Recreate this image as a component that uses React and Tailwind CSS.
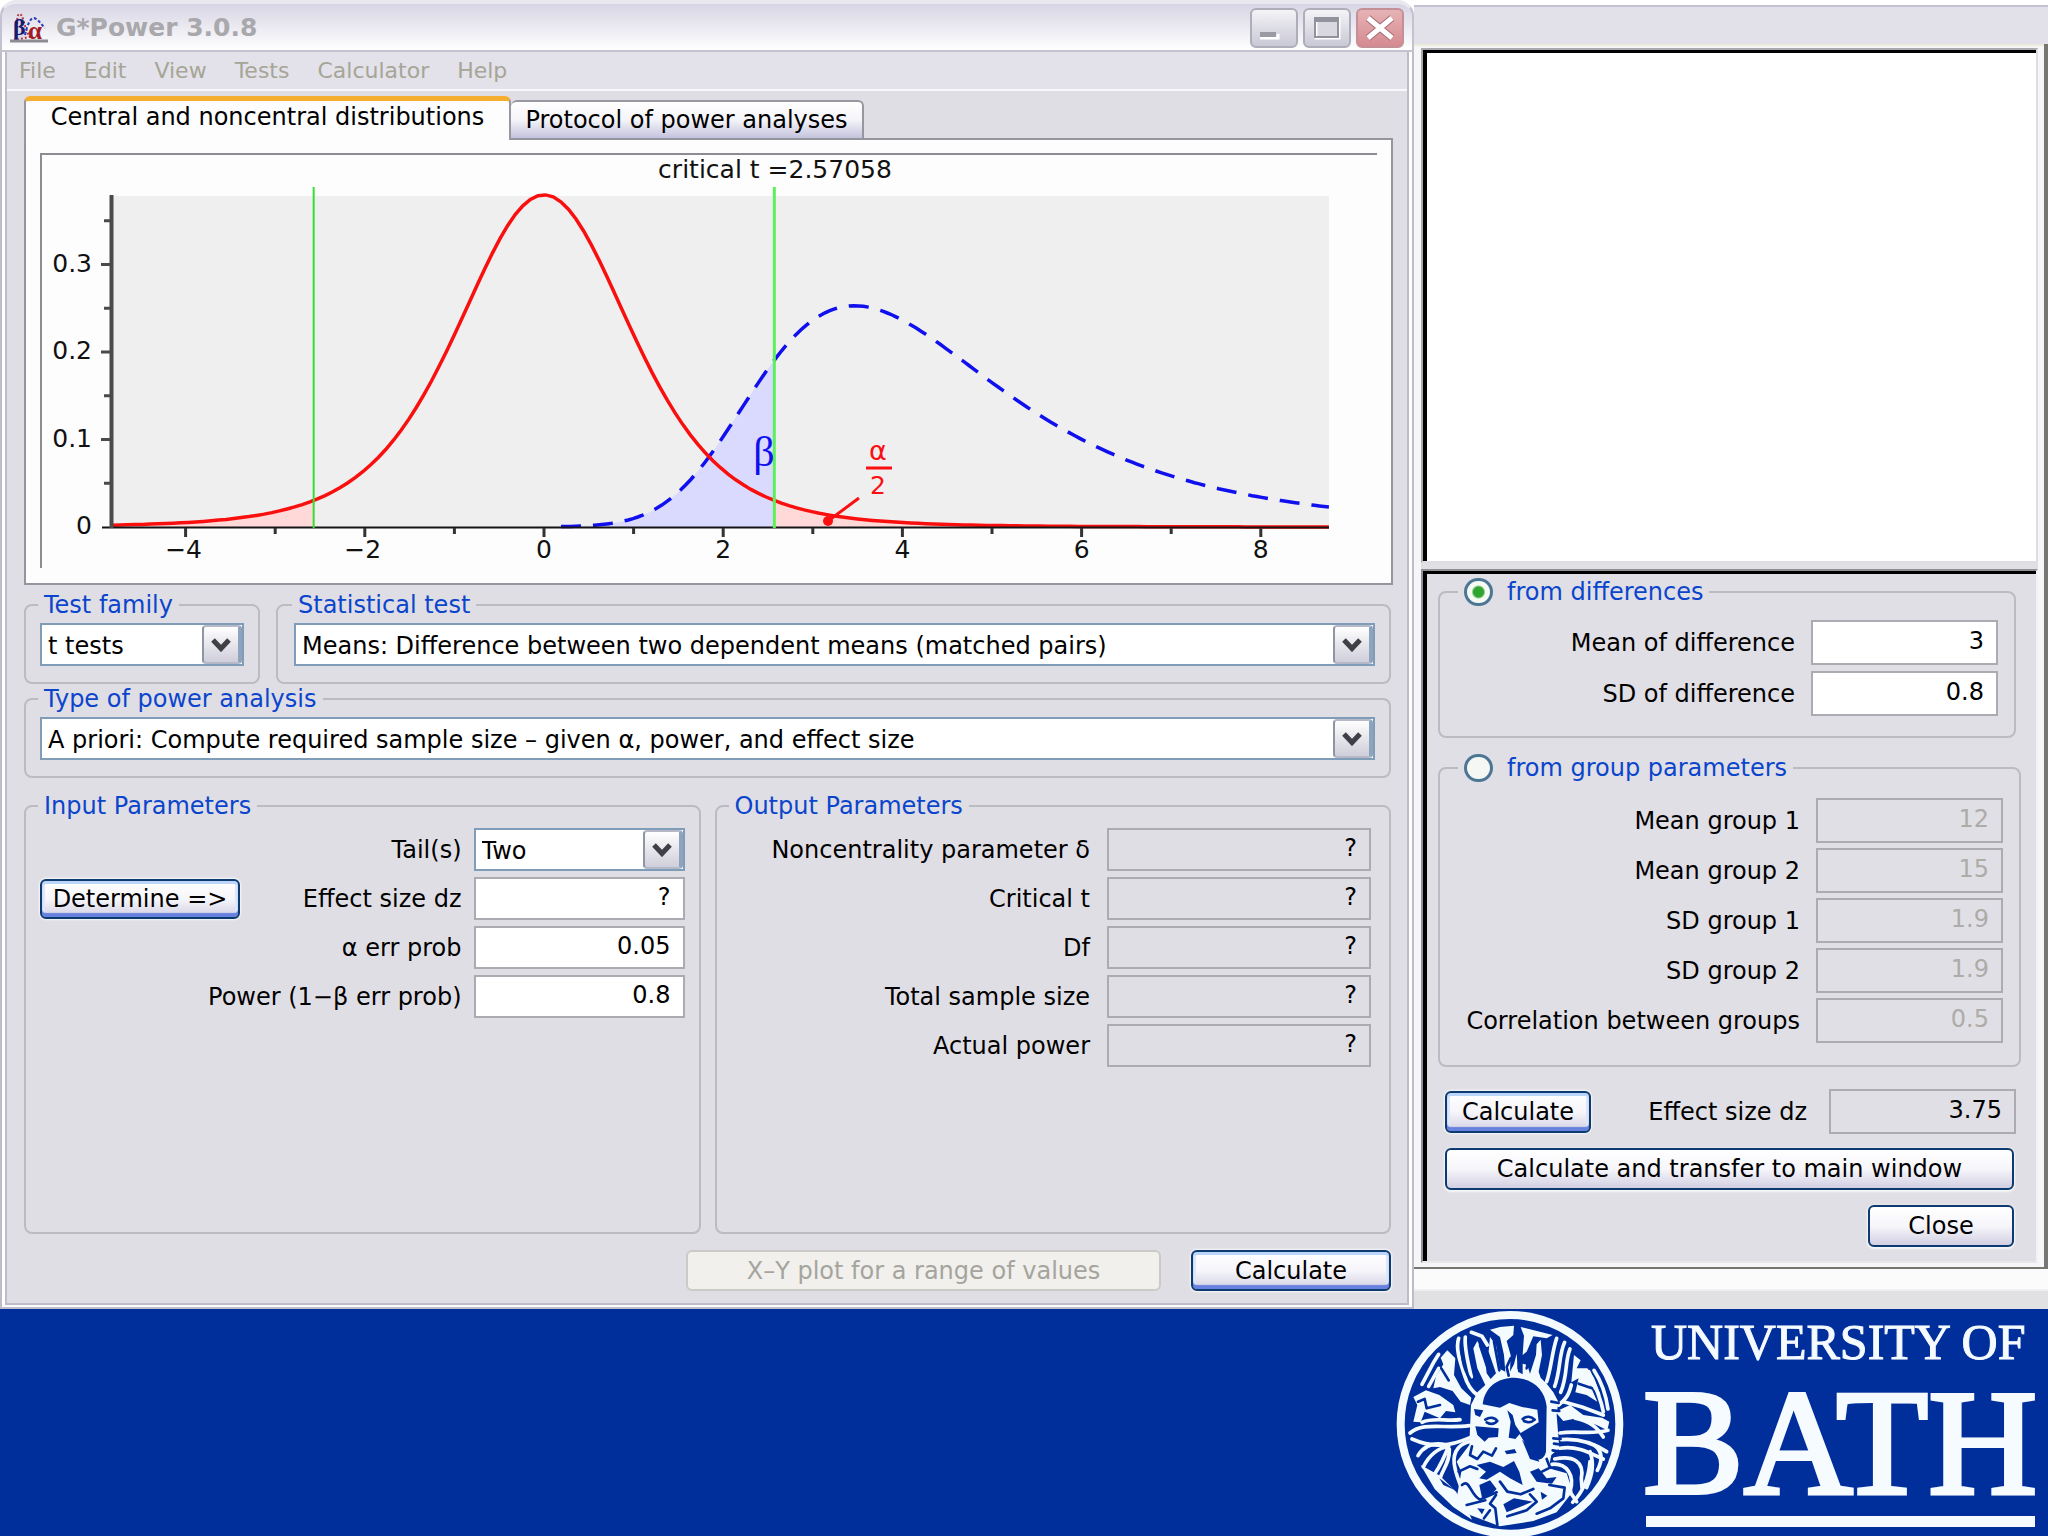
import React, { useId, useState } from "react";

const FRAME_TEXT = "text-2xl leading-7";

/* ---------- distribution maths ---------- */
const DF = 5;
const NCP = 3.87;
const CRIT = 2.57058;
const X0 = 504;
const Y0 = 374;
const SX = 89.6;
const SY = 875;
const LEFT = -4.82;
const RIGHT = 8.76;

const px = (t) => X0 + t * SX;
const py = (d) => Y0 - d * SY;

const centralT = (t) => 0.37961 * Math.pow(1 + (t * t) / DF, -(DF + 1) / 2);

const chiWeights = (() => {
  const out = [];
  let total = 0;
  for (let s = 0.01; s < 3.5; s += 0.02) {
    const w = Math.pow(s, DF - 1) * Math.exp((-DF * s * s) / 2);
    out.push([s, w]);
    total += w;
  }
  return out.map(([s, w]) => [s, w / total]);
})();

const noncentralT = (t) =>
  chiWeights.reduce((sum, [s, w]) => {
    const z = t * s - NCP;
    return sum + (w * s * Math.exp((-z * z) / 2)) / Math.sqrt(2 * Math.PI);
  }, 0);

function line(fn, from, to) {
  const n = 160;
  let d = "";
  for (let i = 0; i <= n; i++) {
    const t = from + ((to - from) * i) / n;
    d += (i ? "L" : "M") + px(t).toFixed(1) + " " + py(fn(t)).toFixed(1);
  }
  return d;
}

const area = (fn, from, to) => line(fn, from, to) + `L${px(to)} ${Y0}L${px(from)} ${Y0}Z`;

const CENTRAL = line(centralT, LEFT, RIGHT);
const NONCENTRAL = line(noncentralT, 0.19, RIGHT);
const BETA_AREA = area(noncentralT, -1, CRIT);
const LEFT_AREA = area(centralT, LEFT, -CRIT);
const RIGHT_AREA = area(centralT, CRIT, RIGHT);

function Chart() {
  return (
    <svg viewBox="0 0 1337 415" className="block h-auto w-full bg-[#fdfdfe]" fontFamily='"DejaVu Sans", sans-serif' fontSize="25" role="img" aria-label="Central and noncentral distributions">
      <path d="M1 415V1H1337" fill="none" stroke="#8c8c92" strokeWidth="2" />
      <rect x="73" y="43" width="1216" height="331" fill="#f0eff0" />
      <path d={BETA_AREA} fill="#dadaff" />
      <path d={LEFT_AREA} fill="#ffd8d8" />
      <path d={RIGHT_AREA} fill="#ffd8d8" />
      <path d={NONCENTRAL} fill="none" stroke="#1010ee" strokeWidth="3.5" strokeDasharray="20 12" />
      <path d={CENTRAL} fill="none" stroke="#fa0f0f" strokeWidth="3.5" />
      <path d="M62 374.5H1289" stroke="#151515" strokeWidth="2" />
      <path d="M71.500 42V375" stroke="#4a4a4a" strokeWidth="4" />
      {[0.1, 0.2, 0.3].map((v) => (
        <path key={v} d={`M61 ${py(v)}H72`} stroke="#4a4a4a" strokeWidth="3" />
      ))}
      {[0.05, 0.15, 0.25, 0.35].map((v) => (
        <path key={v} d={`M64 ${py(v)}H72`} stroke="#4a4a4a" strokeWidth="3" />
      ))}
      {[-4, -2, 0, 2, 4, 6, 8].map((v) => (
        <path key={v} d={`M${px(v)} 375v9`} stroke="#333" strokeWidth="3" />
      ))}
      {[-3, -1, 1, 3, 5, 7].map((v) => (
        <path key={v} d={`M${px(v)} 375v6`} stroke="#333" strokeWidth="3" />
      ))}
      <path d={`M${px(-CRIT)} 34V375`} stroke="#35dd35" strokeWidth="2" />
      <path d={`M${px(CRIT)} 34V375`} stroke="#5df05d" strokeWidth="3" />
      <g fill="#111">
        {[0, 0.1, 0.2, 0.3].map((v) => (
          <text key={v} x="52" y={py(v) + 7} textAnchor="end">
            {v}
          </text>
        ))}
        {[-4, -2, 0, 2, 4, 6, 8].map((v) => (
          <text key={v} x={v < 0 ? px(v) - 2 : px(v)} y="405" textAnchor="middle">
            {v < 0 ? `−${-v}` : v}
          </text>
        ))}
        <text x="735" y="25" textAnchor="middle">
          critical t =2.57058
        </text>
      </g>
      <text x="724" y="313" fill="#1010ee" fontFamily='"Liberation Serif", serif' fontSize="42" textAnchor="middle">
        β
      </text>
      <g fill="#fa1010" textAnchor="middle">
        <text x="838" y="307" fontSize="27">
          α
        </text>
        <text x="838" y="341">
          2
        </text>
        <circle cx="788" cy="368" r="5" />
      </g>
      <path d="M826 315H852M819 345L788 368" stroke="#fa1010" strokeWidth="3" />
    </svg>
  );
}

/* ---------- small controls ---------- */
function ArrowGlyph() {
  return (
    <svg viewBox="0 0 20 14" className="h-[14px] w-5">
      <path d="M2 2L10 10.500L18 2" fill="none" stroke="#3f3f46" strokeWidth="5" />
    </svg>
  );
}

function Select({ label, value }) {
  return (
    <div className="relative border-2 border-[#7f9db9] bg-white">
      <select aria-label={label} defaultValue={value} className="block h-[39px] w-full appearance-none bg-white pt-0.5 pr-11 pl-1.5 outline-none">
        <option>{value}</option>
      </select>
      <span className="pointer-events-none absolute inset-y-0 right-0 flex w-10 items-center justify-center rounded-sm border-2 border-r-4 border-[#8f95a5] border-y-[#b5b8c6] border-r-[#8fa3bd] bg-linear-to-b from-white via-[#e6e6ec] to-[#cfcedb]">
        <ArrowGlyph />
      </span>
    </div>
  );
}

function Group({ title, className = "", children }) {
  return (
    <fieldset className={`min-w-0 rounded-lg border-2 border-[#bcbbc2] ${className}`}>
      <legend className="-ml-0.5 px-1.5 text-[#0b45cc]">{title}</legend>
      {children}
    </fieldset>
  );
}

function TextField({ id, value, tall, tone = "edit" }) {
  const tones = {
    edit: "bg-white text-black",
    read: "bg-transparent text-black",
    off: "bg-transparent text-[#adaca8]",
  };
  return (
    <input
      id={id}
      defaultValue={value}
      readOnly={tone === "read"}
      disabled={tone === "off"}
      className={`w-full min-w-0 rounded-none border-2 border-[#acabb1] pr-3 pb-1 text-right outline-none ${tall ? "h-[45px]" : "h-[43px]"} ${tones[tone]}`}
    />
  );
}

function PushButton({ children, className = "", active }) {
  return (
    <button
      type="button"
      className={`rounded-md border-2 border-[#0d3a70] bg-linear-to-b from-white via-[#f6f6fb] to-[#d2d0e2] text-center whitespace-nowrap ${
        active
          ? "shadow-[inset_0_3px_0_#bcd6fb,inset_0_-4px_1px_#6681de,inset_3px_0_0_#dde6fa,inset_-3px_0_0_#dde6fa,0_0_2px_1px_#f4f8f8]"
          : "shadow-[0_1px_2px_1px_#f4f8f8]"
      } ${className}`}
    >
      {children}
    </button>
  );
}

/* ---------- main window ---------- */
function AppIcon() {
  return (
    <svg viewBox="0 0 38 30" className="h-[30px] w-[38px] overflow-visible" fontFamily='"Liberation Serif", serif' fontWeight="bold">
      <path d="M5 27C8 15 6 3 9 1C14 1 13 13 20 24Z" fill="#e3d7e3" stroke="#b23a4a" strokeWidth="2" strokeDasharray="2 2" />
      <path d="M15 22C18 9 21 5 24 5C28 6 31 11 35 15" fill="none" stroke="#2f3bb5" strokeWidth="2" strokeDasharray="3 2" />
      <text x="3" y="22" fontSize="24" fill="#151a72">
        β
      </text>
      <text x="18" y="26" fontSize="25" fill="#a01c22">
        α
      </text>
      <path d="M0 28H38" stroke="#8c8c94" strokeWidth="3" />
    </svg>
  );
}

function TitleBar() {
  const box = "flex h-10 w-12 items-center justify-center rounded-md border-2";
  const plain = "border-[#aeaeba] bg-linear-to-b from-[#f4f4f7] to-[#c9c8d6]";
  return (
    <header className="flex h-[52px] items-center rounded-t-2xl border-2 border-t-4 border-[#c3c2d0] border-t-[#e9e8ef] bg-linear-to-b from-[#d7d5e4] via-[#ebeaf1] to-white pt-0.5 pr-2 pl-2">
      <AppIcon />
      <h1 className="ml-2 flex-1 text-[25px] font-bold text-[#a9a8ac]">G*Power 3.0.8</h1>
      <div className="flex gap-[5px]">
        <button type="button" aria-label="Minimize" className={`${box} ${plain}`}>
          <svg viewBox="0 0 44 36" className="h-9 w-11">
            <path d="M8 28H26V24" fill="none" stroke="#fff" strokeWidth="3" />
            <rect x="8" y="22" width="16" height="5" fill="#9a9aa4" />
          </svg>
        </button>
        <button type="button" aria-label="Maximize" className={`${box} ${plain}`}>
          <svg viewBox="0 0 44 36" className="h-9 w-11">
            <rect x="11" y="9" width="23" height="19" fill="#d9d8e0" stroke="#fff" strokeWidth="3" />
            <rect x="10" y="8" width="23" height="19" fill="none" stroke="#92929c" strokeWidth="2" />
            <path d="M9 10H34" stroke="#92929c" strokeWidth="4" />
          </svg>
        </button>
        <button type="button" aria-label="Close window" className={`${box} border-[#c58f98] bg-linear-to-b from-[#e6b3b5] to-[#d58a90]`}>
          <svg viewBox="0 0 44 36" className="h-9 w-11">
            <path d="M10 8L34 28M34 8L10 28" stroke="#a56c74" strokeWidth="7" />
            <path d="M10 8L34 28M34 8L10 28" stroke="#fff" strokeWidth="5" />
          </svg>
        </button>
      </div>
    </header>
  );
}

function Menu() {
  return (
    <nav className="flex h-[39px] items-center gap-7 border-b-2 border-[#f8f8fa] bg-[#e3e2ea] pl-3 text-[22px] text-[#a6a596]">
      {["File", "Edit", "View", "Tests", "Calculator", "Help"].map((m) => (
        <button type="button" key={m}>
          {m}
        </button>
      ))}
    </nav>
  );
}

const OUTPUTS = ["Noncentrality parameter δ", "Critical t", "Df", "Total sample size", "Actual power"];

function MainWindow() {
  const id = useId();
  return (
    <section className="flex flex-col">
      <TitleBar />
      <div className="grow border-2 border-t-0 border-[#bdbccb]">
        <div className="h-full border-x-[3px] border-b-2 border-white">
          <div className="h-full border-x-2 border-b-2 border-[#bdbcc8] bg-[#e0dee5]">
            <Menu />
            <div className="pt-[5px] pr-3.5 pb-3 pl-[17px]">
              <div className="flex items-end" role="tablist">
                <button type="button" role="tab" aria-selected="true" className="z-10 -mb-0.5 h-11 w-[487px] rounded-t-md border-x-2 border-t-[5px] border-[#98979f] border-t-[#f5ae30] bg-[#fdfdfe] pb-2 text-center leading-7">
                  Central and noncentral distributions
                </button>
                <button type="button" role="tab" aria-selected="false" className="h-[38px] w-[353px] rounded-t-md border-t-2 border-r-2 border-[#98979f] bg-linear-to-b from-white via-[#f4f4f9] to-[#c4c3dd] text-center">
                  Protocol of power analyses
                </button>
              </div>
              <div className="border-2 border-[#96959d] bg-[#fdfdfe] px-3.5 pt-[13px] pb-[15px]">
                <Chart />
              </div>
              <div className="mr-0.5">
                <div className="mt-1.5 grid grid-cols-[236fr_1115fr] gap-4">
                  <Group title="Test family" className="px-3.5 pt-1 pb-4">
                    <Select label="Test family" value="t tests" />
                  </Group>
                  <Group title="Statistical test" className="pt-1 pr-3.5 pb-4 pl-4">
                    <Select label="Statistical test" value="Means: Difference between two dependent means (matched pairs)" />
                  </Group>
                </div>
                <Group title="Type of power analysis" className="mt-px px-3.5 pt-1 pb-4">
                  <Select label="Type of power analysis" value="A priori: Compute required sample size – given α, power, and effect size" />
                </Group>
                <div className="mt-3.5 grid grid-cols-[677fr_677fr] gap-3.5">
                  <Group title="Input Parameters" className="min-h-[442px] px-3.5 pt-2">
                    <div className="grid grid-cols-[auto_1fr_211px] items-center gap-x-3 gap-y-1.5 text-right">
                      <span className="col-span-2">Tail(s)</span>
                      <div className="text-left">
                        <Select label="Tail(s)" value="Two" />
                      </div>
                      <PushButton active className="h-10 w-[200px]">
                        Determine =&gt;
                      </PushButton>
                      <label htmlFor={id + "dz"}>Effect size dz</label>
                      <TextField id={id + "dz"} value="?" />
                      <label htmlFor={id + "a"} className="col-span-2">
                        α err prob
                      </label>
                      <TextField id={id + "a"} value="0.05" />
                      <label htmlFor={id + "p"} className="col-span-2">
                        Power (1−β err prob)
                      </label>
                      <TextField id={id + "p"} value="0.8" />
                    </div>
                  </Group>
                  <Group title="Output Parameters" className="min-h-[442px] pt-2 pr-[18px] pl-3.5">
                    <div className="grid grid-cols-[1fr_264px] items-center gap-x-[17px] gap-y-1.5 text-right">
                      {OUTPUTS.map((name, i) => (
                        <React.Fragment key={name}>
                          <label htmlFor={id + "o" + i}>{name}</label>
                          <TextField id={id + "o" + i} value="?" tone="read" />
                        </React.Fragment>
                      ))}
                    </div>
                  </Group>
                </div>
                <div className="mt-4 flex justify-end gap-[30px]">
                  <button type="button" disabled className="h-[41px] w-[475px] rounded-md border-2 border-[#cbcac6] bg-[#f1f0ec] text-[#a5a49e]">
                    X–Y plot for a range of values
                  </button>
                  <PushButton active className="h-[41px] w-[200px]">
                    Calculate
                  </PushButton>
                </div>
              </div>
            </div>
          </div>
        </div>
      </div>
    </section>
  );
}

/* ---------- effect size drawer ---------- */
function Radio({ name, label, checked, onChange }) {
  return (
    <legend className="ml-2.5 px-1.5 text-[#0b45cc]">
      <label className="flex items-center gap-3.5">
        <input
          type="radio"
          name={name}
          checked={checked}
          onChange={onChange}
          className="h-7 w-[29px] appearance-none rounded-full border-[3px] border-[#4d7694] bg-[#f5f7f4] checked:bg-[radial-gradient(circle,#2fa52f_0_5px,#f5faf3_7px)]"
        />
        {label}
      </label>
    </legend>
  );
}

function RadioGroup({ radio, rows, tone, className, gap }) {
  const id = useId();
  return (
    <fieldset className={`min-w-0 rounded-lg border-2 border-[#bcbbc2] pr-4 pl-2 ${className}`}>
      {radio}
      <div className={`grid grid-cols-[1fr_187px] items-center gap-x-4 text-right whitespace-nowrap ${gap}`}>
        {rows.map(([name, value], i) => (
          <React.Fragment key={name}>
            <label htmlFor={id + i}>{name}</label>
            <TextField id={id + i} value={value} tall tone={tone} />
          </React.Fragment>
        ))}
      </div>
    </fieldset>
  );
}

function Drawer() {
  const id = useId();
  const [mode, setMode] = useState("diff");
  return (
    <section className="flex flex-col bg-[#e2e1ea]">
      <div className="h-11 border-t-[5px] border-white shadow-[inset_0_2px_0_#c3c2d2]" />
      <div className="border-r-4 border-b-2 border-[#777672] bg-[#f6f6f8] pt-1 pr-1.5 pb-1 pl-[7px] shadow-[inset_0_2px_0_#ecebdc]">
        <div className="h-[515px] border-2 border-[#a9a9ae] border-r-[#dddde2] border-b-[#dddde2]">
          <div className="h-full border-t-[3px] border-l-4 border-black bg-white" />
        </div>
        <div className="h-1.5 bg-[#e0e0e4]" />
        <div className="border-2 border-[#8f8f95] border-r-[#f2f2f4] border-b-[#e8e8ea]">
          <div className="border-t-[3px] border-l-4 border-black bg-[#e0dfe5] pt-1 pb-3.5 pl-[11px]">
            <RadioGroup
              className="mr-5 pt-3.5 pb-5"
              gap="gap-y-1.5"
              tone="edit"
              radio={<Radio name={id} label="from differences" checked={mode === "diff"} onChange={() => setMode("diff")} />}
              rows={[
                ["Mean of difference", "3"],
                ["SD of difference", "0.8"],
              ]}
            />
            <RadioGroup
              className="mt-4 mr-[15px] pt-4 pb-[22px]"
              gap="gap-y-[5px]"
              tone="off"
              radio={<Radio name={id} label="from group parameters" checked={mode === "group"} onChange={() => setMode("group")} />}
              rows={[
                ["Mean group 1", "12"],
                ["Mean group 2", "15"],
                ["SD group 1", "1.9"],
                ["SD group 2", "1.9"],
                ["Correlation between groups", "0.5"],
              ]}
            />
            <div className="mt-[22px] flex items-center pr-5 pl-[7px]">
              <PushButton active className="h-[42px] w-[146px]">
                Calculate
              </PushButton>
              <label htmlFor={id + "dz"} className="flex-1 pr-[22px] text-right">
                Effect size dz
              </label>
              <div className="w-[187px]">
                <TextField id={id + "dz"} value="3.75" tall tone="read" />
              </div>
            </div>
            <div className="mt-3.5 flex flex-col items-end gap-[15px] pr-[22px] pl-[7px]">
              <PushButton className="h-[42px] w-full">Calculate and transfer to main window</PushButton>
              <PushButton className="h-[42px] w-[146px]">Close</PushButton>
            </div>
          </div>
        </div>
      </div>
      <div className="h-[22px] border-b-2 border-[#efeef2] bg-[#fbfbfb]" />
      <div className="grow bg-[#e1e0e3]" />
    </section>
  );
}

/* ---------- university logo ---------- */
const WHITE_SHAPES = [
  "M243 300L262 262L286 240L262 190L250 130L262 108L284 152L290 205L302 222L318 205L296 140L300 96L318 120L330 192L346 200L342 150L330 96L300 74L330 66L372 62L370 90L350 108L362 150L360 200L372 178L380 146L384 200L398 208L398 176L412 180L420 206L438 150L440 118L452 104L456 150L446 200L452 218L470 236L490 262L505 290L500 330L508 430L484 450L476 490L530 505L548 560L500 622L430 648L330 664L240 630L200 580L214 500L200 470L238 420Z",
  "M172 136L196 160L192 210L214 250L244 278L240 300L212 290L188 258L150 246L130 250L138 214L160 178L152 158Z",
  "M70 276L108 256L148 270L190 300L196 322L168 318L150 340L104 320L92 352L70 350L82 300Z",
  "M392 66L488 90L470 100L430 94L410 140L398 150L402 92Z",
  "M552 150L572 166L560 190L592 190L612 218L632 270L620 262L600 240L622 290L590 270L556 262L566 220L544 232Z",
  "M92 480L150 512L198 560L236 622L246 644L190 606L134 552Z",
  "M496 320L540 300L580 330L636 338L658 350L652 376L620 360L560 340L520 348Z",
];

const WHITE_STROKES = [
  "M96 238L132 170L146 148",
  "M116 244L146 190",
  "M206 100C196 130 210 170 224 212C232 240 246 258 262 270",
  "M226 96C222 130 236 180 244 216",
  "M244 82L276 94L292 120",
  "M500 100C486 140 484 190 470 230",
  "M524 112C506 150 512 196 494 244",
  "M540 132C524 170 534 210 512 262",
  "M612 196C634 230 648 270 654 312",
  "M596 200C618 246 632 280 640 320",
  "M60 384C100 350 160 372 238 362",
  "M66 402C130 430 180 424 240 398",
  "M84 452C104 418 136 412 170 420",
  "M100 486C118 450 142 430 176 424C160 460 150 490 124 520",
  "M178 432C180 470 160 490 150 520",
  "M236 410C200 420 184 450 196 494C204 530 222 560 226 590",
  "M96 352C130 336 170 350 210 344",
  "M506 300C530 280 536 270 544 240",
  "M510 384C560 376 600 390 654 376",
  "M514 404C560 400 610 414 650 440",
  "M510 430C566 420 610 450 640 462",
  "M494 462C550 450 584 470 574 520L576 548",
  "M600 440C614 480 606 510 590 548",
  "M612 420C640 440 636 470 622 496",
  "M486 478C530 474 556 510 540 560L560 590",
  "M600 470C596 520 580 560 548 592",
  "M520 290L576 306L640 330",
  "M556 340C600 350 620 364 640 396",
];

const BLUE_SHAPES = [
  "M278 298C284 244 326 218 372 218C426 220 464 250 470 304L468 440C462 464 444 470 430 456L388 386L412 372L446 352L442 314L396 306L358 294L330 308Z",
  "M352 316L368 330L376 360L392 384L376 402L356 398L362 350Z",
  "M256 364L326 370L324 396L296 398L284 410L262 390Z",
  "M252 312L280 316L270 336L256 330Z",
  "M396 404L440 448L448 470L420 462Z",
  "M344 438L374 432L380 444L350 448Z",
  "M260 480L300 470L340 486L372 468L388 500L398 540L360 520L330 500L290 524L268 520L288 500Z",
  "M268 540L300 526L320 552L300 572L276 578Z",
  "M420 500L446 490L470 520L500 516L486 536L440 530Z",
  "M340 598L372 580L428 590L390 606L350 622Z",
  "M148 520L196 556L160 540Z",
  "M262 610L284 612L276 628Z",
  "M452 560L472 572L456 584Z",
];

const BLUE_STROKES = [
  "M356 212L350 186L362 160",
  "M216 130C214 180 234 220 262 248",
  "M270 120L292 186",
  "M312 110L328 196",
  "M390 110L386 190",
  "M426 120L410 190",
  "M286 344C300 334 316 338 322 348C312 360 300 358 290 352",
  "M398 342C410 332 424 334 434 344C424 354 410 352 402 348",
  "M246 424L240 450L262 462L280 440L306 452L318 430",
  "M206 500L240 484L262 492",
  "M216 540C240 520 240 570 270 584L320 562",
  "M330 530L352 560L392 568L430 552",
  "M322 660L316 610L300 596L318 570",
  "M352 634L410 616L440 590L420 568",
  "M456 500L480 488L470 462",
  "M478 540L524 548L520 580L480 610L440 626",
  "M230 600L286 586",
  "M282 640L300 616",
  "M484 290L506 294M488 316L508 318M490 400L512 402M492 416L508 418M488 436L508 440",
  "M84 290L104 282L110 310L150 300",
  "M154 190L176 226",
  "M566 236L606 250",
];

function Emblem() {
  return (
    <g transform="scale(0.3333)" strokeLinejoin="round" strokeLinecap="round">
      <circle cx="360" cy="346" r="328" fill="none" stroke="#f4fbff" strokeWidth="24" />
      <g transform="translate(0 -12)">
        {WHITE_SHAPES.map((d) => (
          <path key={d} d={d} fill="#f4fbff" />
        ))}
        {WHITE_STROKES.map((d) => (
          <path key={d} d={d} fill="none" stroke="#f4fbff" strokeWidth="11" />
        ))}
        {BLUE_SHAPES.map((d) => (
          <path key={d} d={d} fill="#002f9c" />
        ))}
        {BLUE_STROKES.map((d) => (
          <path key={d} d={d} fill="none" stroke="#002f9c" strokeWidth="8" />
        ))}
      </g>
    </g>
  );
}

function Logo() {
  return (
    <svg viewBox="0 0 658 228" className="h-[228px] w-[658px]" fontFamily='"Liberation Serif", serif' fill="#f6fbff" role="img" aria-label="University of Bath">
      <Emblem />
      <text x="261" y="50" fontSize="50" stroke="#f6fbff" strokeWidth="1">
        UNIVERSITY OF
      </text>
      <text x="253" y="184" fontSize="151" stroke="#f6fbff" strokeWidth="4">
        BATH
      </text>
      <rect x="256" y="207" width="389" height="11" />
    </svg>
  );
}

export default function App() {
  return (
    <div className={`flex min-h-screen flex-col bg-[#002f9c] font-['DejaVu_Sans',sans-serif] text-black ${FRAME_TEXT}`}>
      <main className="grid grid-cols-[1414fr_634fr] bg-white">
        <MainWindow />
        <Drawer />
      </main>
      <footer className="flex grow items-start justify-end overflow-hidden">
        <Logo />
      </footer>
    </div>
  );
}
